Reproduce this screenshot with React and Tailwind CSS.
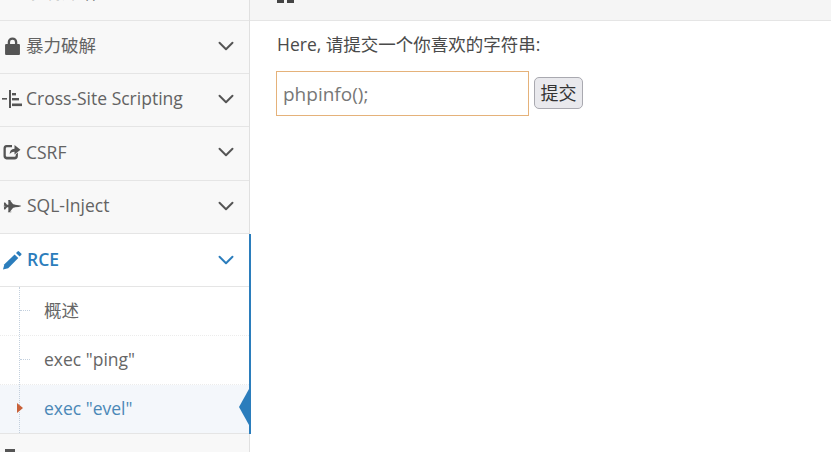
import React from 'react';
import { FaFighterJet } from 'react-icons/fa';
import { LuChevronDown } from 'react-icons/lu';

function LockIcon() {
    return (
        <svg viewBox="0 0 16 18" className="w-[17px] h-[18px]" fill="currentColor" preserveAspectRatio="none">
            <path d="M3.5 7V5a4.5 4.5 0 0 1 9 0v2h1.5a1 1 0 0 1 1 1v9a1 1 0 0 1-1 1H2a1 1 0 0 1-1-1V8a1 1 0 0 1 1-1zM5.7 7h4.6V5a2.3 2.3 0 0 0-4.6 0z" />
        </svg>
    );
}

function SitemapIcon() {
    return (
        <svg viewBox="0 0 20 18" className="w-5 h-[18px]" fill="currentColor">
            <rect x="0" y="8" width="5" height="1.6" />
            <rect x="7" y="0" width="2" height="18" />
            <rect x="10" y="3" width="4" height="2.4" />
            <rect x="10" y="8" width="7" height="2.4" />
            <rect x="10" y="13.5" width="10" height="2.6" />
        </svg>
    );
}

function ShareIcon() {
    return (
        <svg viewBox="0 0 18 16" className="w-[18px] h-4" fill="currentColor">
            <path d="M3.5 1H9v2.2H4a1.2 1.2 0 0 0-1.2 1.2v7.2A1.2 1.2 0 0 0 4 12.8h7.5a1.2 1.2 0 0 0 1.2-1.2V10.5l2.2-2v3.6A3.4 3.4 0 0 1 11.5 15.5H3.5A3.4 3.4 0 0 1 .5 12.1V4.4A3.4 3.4 0 0 1 3.5 1z" />
            <path d="M11.5 1l6 4.8-6 4.8V7.7c-2.6 0-4 .8-4.8 2.6 0-3.4 1.6-5.4 4.8-5.6z" />
        </svg>
    );
}

function PencilIcon() {
    return (
        <svg viewBox="0 0 20 19" className="w-5 h-[19px]" fill="currentColor">
            <path d="M1 18.5l1.4-5.2L12.6 3.4l3.7 3.7L6.2 17.2z" />
            <path d="M14 2l1.6-1.6a1 1 0 0 1 1.4 0l2.2 2.2a1 1 0 0 1 0 1.4L17.6 5.6z" />
        </svg>
    );
}

function NavRow({ icon, label, active, gap, first }) {
    return (
        <div className={`h-[53.33px] shrink-0 flex items-center border-b border-[#e5e5e5] pl-[2px] pr-[10px] ${active ? 'pb-0' : 'pb-[2px]'} ${first ? 'mt-[-32.66px]' : ''} ${active ? 'bg-white text-[#2b7dbc] font-semibold' : 'bg-[#f8f8f8] text-[#636363]'}`}>
            <span className={`w-5 flex justify-center shrink-0 ${active ? 'text-[#2b7dbc]' : 'text-[#555555]'}`}>{icon}</span>
            <span className={`text-[17.5px] leading-none whitespace-nowrap font-['Open_Sans','Noto_Sans_CJK_SC',sans-serif] ${gap}`}>{label}</span>
            <LuChevronDown strokeWidth={1.8} className={`ml-auto w-[26px] h-[26px] ${active ? 'text-[#2b7dbc]' : 'text-[#555555]'}`} />
        </div>
    );
}

function SubRow({ label, current, last }) {
    return (
        <div className={`relative shrink-0 h-[49px] flex items-center pl-[44px] pb-[2px] text-[17.5px] leading-none font-['Open_Sans','Noto_Sans_CJK_SC',sans-serif] ${current ? 'bg-[#f4f7fb] text-[#4b88b7]' : 'bg-white text-[#666666]'} ${last ? 'border-b border-[#e5e5e5]' : 'border-b border-dotted border-[#ececec]'}`}>
            {!current && <span className="absolute left-[20px] top-[23px] w-[10px] border-t border-dotted border-[#c3d0de]" />}
            {current && <span className="absolute z-10 left-[17px] top-[18px] border-y-[5px] border-y-transparent border-l-[6px] border-l-[#c86139]" />}
            {label}
            {current && <span className="absolute right-0 top-[4px] border-y-[18px] border-y-transparent border-r-[10px] border-r-[#2b7dbc]" />}
        </div>
    );
}

export default function App() {
    return (
        <div className="w-[831px] h-[452px] overflow-hidden flex bg-white">
            <aside className="relative w-[250px] shrink-0 h-full bg-[#f8f8f8] border-r border-[#e0e0e0] flex flex-col">
                <NavRow first icon={null} label="系统介绍" gap="ml-[4px]" />
                <NavRow icon={<LockIcon />} label="暴力破解" gap="ml-[4px]" />
                <NavRow icon={<SitemapIcon />} label="Cross-Site Scripting" gap="ml-[4px]" />
                <NavRow icon={<ShareIcon />} label="CSRF" gap="ml-[4px]" />
                <NavRow icon={<FaFighterJet className="w-[19px] h-[14px]" />} label="SQL-Inject" gap="ml-[5px]" />
                <div className="relative flex flex-col">
                    <NavRow active icon={<PencilIcon />} label="RCE" gap="ml-[5px]" />
                    <SubRow label="概述" />
                    <SubRow label='exec "ping"' />
                    <SubRow current last label='exec "evel"' />
                    <span className="absolute left-[19px] top-[53px] bottom-[1px] border-l border-dotted border-[#c3d0de]" />
                    <span className="absolute right-[-2px] top-0 bottom-0 w-[2px] bg-[#2b7dbc]" />
                </div>
                <div className="pl-[5px] pt-[15px]"><div className="w-[10px] h-[4px] bg-[#555555]" /></div>
            </aside>
            <main className="flex-1 min-w-0 flex flex-col font-['Open_Sans','Noto_Sans_CJK_SC',sans-serif]">
                <div className="h-[21px] shrink-0 bg-[#f5f5f5] border-b border-[#e5e5e5] pl-[27px]">
                    <div className="flex gap-[3px]">
                        <span className="w-[7px] h-[3px] bg-[#444444]" />
                        <span className="w-[7px] h-[3px] bg-[#444444]" />
                    </div>
                </div>
                <div className="pl-[26px] pt-[12px]">
                    <p className="text-[17.5px] leading-[22px] text-[#4a4a4a] pl-[1px]">Here, 请提交一个你喜欢的字符串:</p>
                    <div className="mt-[16px] flex items-center gap-[5px]">
                        <input readOnly value="phpinfo();" className="w-[253px] h-[45px] border border-[#e5b27a] px-[6px] text-[19px] text-[#777777] outline-none bg-white" />
                        <button className="h-[32px] w-[49px] mb-[2px] rounded-[5px] border border-[#a9a9b0] bg-[#e9e9ed] text-[18px] text-[#333333] leading-none">提交</button>
                    </div>
                </div>
            </main>
        </div>
    );
}
